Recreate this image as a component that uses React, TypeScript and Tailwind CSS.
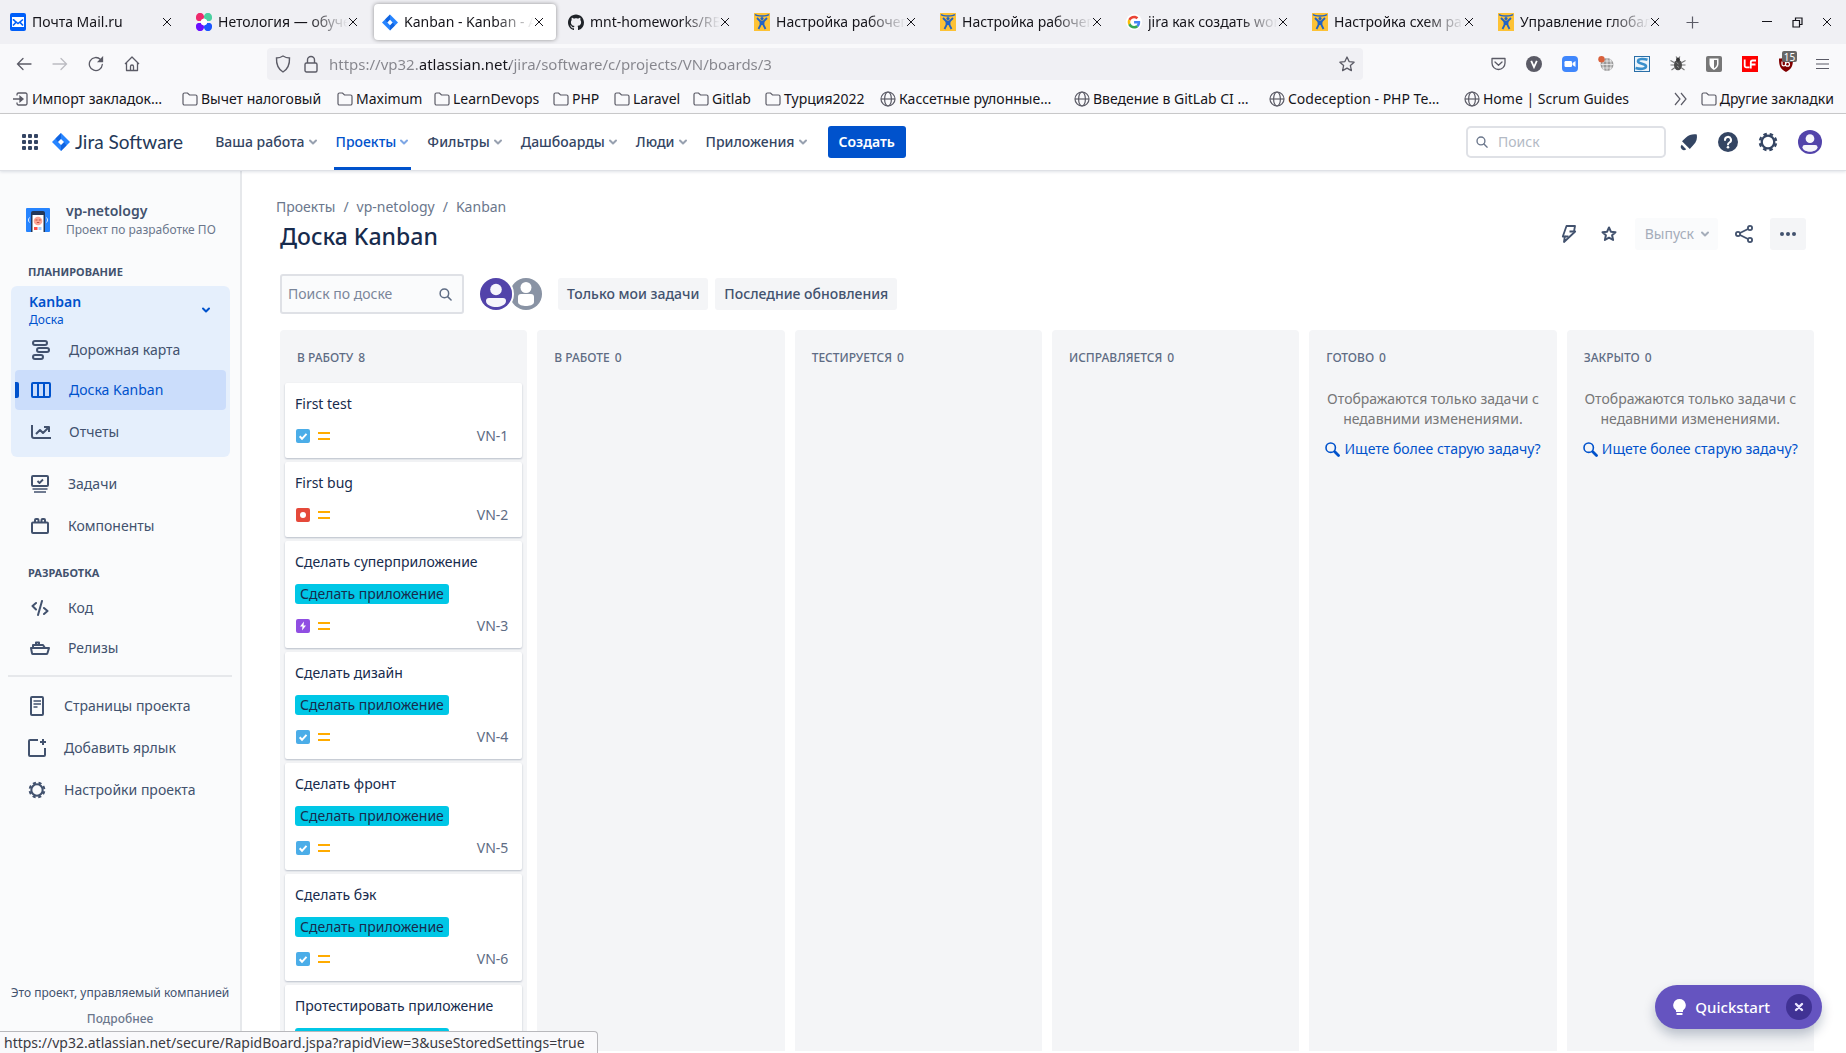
import React, { ReactNode } from "react";

/* ---------- browser chrome icons ---------- */

const Close = ({ size = 10 }: { size?: number }) => (
  <svg width={size} height={size} viewBox="0 0 10 10" fill="none" stroke="#15141a" strokeWidth="1">
    <path d="M1 1l8 8M9 1l-8 8" />
  </svg>
);

const MailIcon = () => (
  <svg width="16" height="18" viewBox="0 0 16 18">
    <rect width="16" height="18" rx="2" fill="#005ff9" />
    <rect x="2" y="4" width="12" height="10" fill="#fff" />
    <path d="M3 6.500l3.200 2.600L3 12.500M13 6.500L8 10.500 3 6.500M9.800 9.100l3.200 3.400" fill="none" stroke="#005ff9" strokeWidth="1.600" />
  </svg>
);

const NetologyIcon = () => (
  <svg width="16" height="18" viewBox="0 0 16 18">
    <path d="M0 4a4 4 0 1 1 7 2.500L5.500 8H2a3 3 0 0 1-2-3z" fill="#ee2a6c" />
    <path d="M16 4a4 4 0 1 0-7 2.500L10.500 8H14a3 3 0 0 0 2-3z" fill="#4bd0a0" />
    <path d="M0 14a4 4 0 1 0 7-2.500L5.500 10H2a3 3 0 0 0-2 3z" fill="#6b0fff" />
    <path d="M16 14a4 4 0 1 1-7-2.500L10.500 10H14a3 3 0 0 1 2 3z" fill="#1a56ff" />
    <circle cx="8" cy="9" r="3.200" fill="#fff" />
  </svg>
);

const JiraIcon = ({ size = 18 }: { size?: number }) => (
  <svg width={size} height={size} viewBox="0 0 18 18">
    <path d="M9 0l9 9-9 9-9-9z" fill="#2684ff" />
    <path d="M9 0v6L6 9 3.500 5.500z" fill="#0b5ad6" opacity="0.750" />
    <path d="M9 18v-6l3-3 2.500 3.500z" fill="#0b5ad6" opacity="0.750" />
    <path d="M9 6l3 3-3 3-3-3z" fill="#fff" />
  </svg>
);

const GithubIcon = () => (
  <svg width="17" height="17" viewBox="0 0 16 16" fill="#1f2328">
    <path d="M8 0C3.580 0 0 3.580 0 8c0 3.540 2.290 6.530 5.470 7.590.4.070.550-.170.550-.380 0-.190-.010-.820-.010-1.490-2.010.370-2.530-.490-2.690-.940-.090-.230-.480-.940-.820-1.130-.280-.150-.680-.520-.010-.530.630-.010 1.080.580 1.230.820.720 1.210 1.870.870 2.330.660.070-.520.280-.870.510-1.070-1.780-.2-3.640-.890-3.640-3.950 0-.870.310-1.590.820-2.150-.080-.2-.360-1.020.080-2.120 0 0 .670-.210 2.200.820.640-.180 1.320-.270 2-.270s1.360.090 2 .270c1.530-1.040 2.200-.820 2.200-.820.440 1.100.160 1.920.080 2.120.510.560.820 1.270.820 2.150 0 3.070-1.870 3.750-3.650 3.950.290.250.540.730.540 1.480 0 1.070-.010 1.930-.010 2.200 0 .210.150.460.550.380A8.010 8.010 0 0 0 16 8c0-4.420-3.580-8-8-8z" />
  </svg>
);

const OldJiraIcon = () => (
  <svg width="16" height="18" viewBox="0 0 16 18">
    <rect width="16" height="18" fill="#fdc235" />
    <path d="M1 1.500c2.500 2 11.500 2 14 0" fill="none" stroke="#2263c4" strokeWidth="1.400" />
    <path d="M3 5l3.500 3.500h3L13 5M6.500 8v4L4.500 16M9.500 8v4l2 4" fill="none" stroke="#2263c4" strokeWidth="1.800" />
    <path d="M5.500 8h5L9.500 12h-3z" fill="#2263c4" />
    <circle cx="8" cy="5.500" r="1.600" fill="#2263c4" />
  </svg>
);

const GoogleIcon = () => (
  <svg width="16" height="16" viewBox="0 0 48 48">
    <circle cx="24" cy="24" r="24" fill="#fff" />
    <g transform="translate(5 5) scale(.8)">
      <path fill="#EA4335" d="M24 9.500c3.540 0 6.710 1.220 9.210 3.600l6.850-6.850C35.900 2.380 30.470 0 24 0 14.620 0 6.510 5.380 2.560 13.220l7.980 6.190C12.430 13.720 17.740 9.500 24 9.500z" />
      <path fill="#4285F4" d="M46.980 24.550c0-1.570-.15-3.090-.38-4.550H24v9.020h12.940c-.58 2.960-2.260 5.480-4.780 7.180l7.730 6c4.510-4.180 7.090-10.360 7.090-17.650z" />
      <path fill="#FBBC05" d="M10.530 28.590c-.48-1.450-.76-2.990-.76-4.590s.27-3.140.76-4.590l-7.980-6.190C.92 16.460 0 20.120 0 24c0 3.880.92 7.540 2.560 10.780l7.970-6.190z" />
      <path fill="#34A853" d="M24 48c6.480 0 11.930-2.130 15.890-5.810l-7.730-6c-2.150 1.450-4.920 2.300-8.160 2.300-6.260 0-11.570-4.220-13.470-9.910l-7.980 6.190C6.510 42.620 14.620 48 24 48z" />
    </g>
  </svg>
);

const FolderIcon = () => (
  <svg width="16" height="16" viewBox="0 0 16 16" fill="none" stroke="#5b5b66" strokeWidth="1.200" className="shrink-0">
    <path d="M1 3.500a1.500 1.500 0 0 1 1.500-1.500h3l2 2h6A1.500 1.500 0 0 1 15 5.500v7a1.500 1.500 0 0 1-1.500 1.500h-11A1.500 1.500 0 0 1 1 12.500z" />
  </svg>
);

const GlobeIcon = () => (
  <svg width="16" height="16" viewBox="0 0 16 16" fill="none" stroke="#5b5b66" strokeWidth="1.200" className="shrink-0">
    <circle cx="8" cy="8" r="7" />
    <ellipse cx="8" cy="8" rx="3.400" ry="7" />
    <path d="M1 8h14" />
  </svg>
);

const ImportIcon = () => (
  <svg width="16" height="16" viewBox="0 0 16 16" fill="none" stroke="#5b5b66" strokeWidth="1.300" className="shrink-0">
    <path d="M4 4.500V3.500A1.500 1.500 0 0 1 5.500 2h7A1.500 1.500 0 0 1 14 3.500v9a1.500 1.500 0 0 1-1.500 1.500h-7A1.500 1.500 0 0 1 4 12.500V11.500M0 8h8" />
    <path d="M7 5.500L10 8l-3 2.500z" fill="#5b5b66" />
  </svg>
);

type TabInfo = { icon: ReactNode; title: string; active?: boolean };
const tabs: TabInfo[] = [
  { icon: <MailIcon />, title: "Почта Mail.ru" },
  { icon: <NetologyIcon />, title: "Нетология — обучение" },
  { icon: <JiraIcon size={17} />, title: "Kanban - Kanban - Agile", active: true },
  { icon: <GithubIcon />, title: "mnt-homeworks/README" },
  { icon: <OldJiraIcon />, title: "Настройка рабочего" },
  { icon: <OldJiraIcon />, title: "Настройка рабочего" },
  { icon: <GoogleIcon />, title: "jira как создать workflow" },
  { icon: <OldJiraIcon />, title: "Настройка схем рабочих" },
  { icon: <OldJiraIcon />, title: "Управление глобальными" },
];

const TabStrip = () => (
  <div className="flex h-11 items-stretch bg-[#f0f0f4] pr-1">
    <div role="tablist" className="flex min-w-0">
      {tabs.map((t, i) => (
        <div key={i} className="flex w-[186px] min-w-0 px-[2px] py-1">
          <div
            className={
              t.active
                ? "flex min-w-0 flex-1 items-center rounded bg-white pr-3 pl-2 shadow-[0_0_4px_rgba(0,0,0,0.4)]"
                : "flex min-w-0 flex-1 items-center pr-3 pl-2"
            }
          >
            <button role="tab" aria-selected={!!t.active} className="flex min-w-0 flex-1 items-center gap-[6px]">
              <span className="flex w-4 shrink-0 justify-center">{t.icon}</span>
              <span className="flex-1 overflow-hidden text-left text-sm whitespace-nowrap text-[#15141a] [mask-image:linear-gradient(to_right,black_70%,transparent)]">
                {t.title}
              </span>
            </button>
            <button aria-label="Закрыть вкладку" className="shrink-0">
              <Close />
            </button>
          </div>
        </div>
      ))}
    </div>
    <button aria-label="Новая вкладка" className="flex w-9 items-center justify-center">
      <svg width="13" height="13" viewBox="0 0 13 13" stroke="#5b5b66" strokeWidth="1.200">
        <path d="M6.500 0.500v12M0.500 6.500h12" />
      </svg>
    </button>
    <div className="ml-auto flex">
      <button aria-label="Свернуть" className="flex w-[30px] items-center justify-center">
        <svg width="10" height="10" stroke="#15141a">
          <path d="M0 4.500h10" />
        </svg>
      </button>
      <button aria-label="Восстановить" className="flex w-[30px] items-center justify-center">
        <svg width="11" height="11" fill="none" stroke="#15141a" strokeWidth="1.200">
          <path d="M1 3.500h6.500V10H1zM3.500 3V1H10v6.500H8" />
        </svg>
      </button>
      <button aria-label="Закрыть" className="flex w-[30px] items-center justify-center">
        <Close />
      </button>
    </div>
  </div>
);

const extensions: { label: string; icon: ReactNode }[] = [
  {
    label: "Pocket",
    icon: (
      <svg width="15" height="14" viewBox="0 0 15 14" fill="none" stroke="#5b5b66" strokeWidth="1.300" strokeLinejoin="round" strokeLinecap="round">
        <path d="M1 1.500h13V6a6.500 6.500 0 0 1-13 0zM4 5l3.500 3.300L11 5" />
      </svg>
    ),
  },
  {
    label: "V",
    icon: (
      <svg width="16" height="16" viewBox="0 0 16 16">
        <circle cx="8" cy="8" r="8" fill="#5b5b66" />
        <path d="M5.200 4.800L8 11l2.800-6.200" fill="none" stroke="#fff" strokeWidth="1.800" />
      </svg>
    ),
  },
  {
    label: "Zoom",
    icon: (
      <svg width="16" height="16" viewBox="0 0 16 16">
        <rect width="16" height="16" rx="4" fill="#4087fc" />
        <rect x="2.500" y="5" width="7.500" height="6" rx="1.200" fill="#fff" />
        <path d="M10.500 7l3-2v6l-3-2z" fill="#fff" />
      </svg>
    ),
  },
  {
    label: "Прокси",
    icon: (
      <svg width="16" height="16" viewBox="0 0 16 16">
        <circle cx="9" cy="8.500" r="6.500" fill="#9b9b9b" />
        <path d="M9 2v13M2.500 8.500h13M4 5h10M4 12h10M6 3c-1.500 4-1.500 7 0 11M12 3c1.500 4 1.500 7 0 11" fill="none" stroke="#f9f9fb" strokeWidth="0.700" />
        <circle cx="3.500" cy="3.200" r="3.200" fill="#d9603b" />
      </svg>
    ),
  },
  {
    label: "Stylish",
    icon: (
      <svg width="16" height="16" viewBox="0 0 16 16">
        <rect x="0.500" y="0.500" width="15" height="15" fill="#eef5fb" stroke="#2a6fa8" />
        <path d="M13.500 3.800C10 2.500 4 2.500 4 5.300c0 3 8 2 8 5 0 3-6 3-10.500 1.700" fill="none" stroke="#3a8fcb" strokeWidth="2.600" />
      </svg>
    ),
  },
  {
    label: "Жук",
    icon: (
      <svg width="16" height="16" viewBox="0 0 16 16">
        <ellipse cx="8" cy="9" rx="4" ry="5.200" fill="#4c4c4c" />
        <circle cx="8" cy="3.500" r="2" fill="#333" />
        <path d="M0.500 4.500L5 7M15.500 4.500L11 7M0.500 9H4M15.500 9H12M1.500 14L5 11.500M14.500 14L11 11.500M6 0.500L7 2M10 0.500L9 2" stroke="#777" strokeWidth="1.100" />
        <path d="M6.500 6.500l2 1.500M7 10l2 1.500" stroke="#999" />
      </svg>
    ),
  },
  {
    label: "Bitwarden",
    icon: (
      <svg width="16" height="16" viewBox="0 0 16 16">
        <rect width="16" height="16" rx="2" fill="#777" />
        <path d="M3.500 2.500h9V8c0 3-2.500 5-4.500 6-2-1-4.500-3-4.500-6z" fill="#fff" />
        <path d="M8 4h3v4c0 2-1.500 3.300-3 4.200z" fill="#777" />
      </svg>
    ),
  },
  {
    label: "LF",
    icon: (
      <svg width="16" height="16" viewBox="0 0 16 16">
        <rect width="16" height="16" fill="#f00" />
        <path d="M2.700 3.500v6.300a1.500 1.500 0 0 0 1.500 1.500H7.500M8.800 12.500V6.300a1.800 1.800 0 0 1 1.800-1.800H14M9 8.500h4.500" fill="none" stroke="#fff" strokeWidth="1.800" />
      </svg>
    ),
  },
  {
    label: "uBlock",
    icon: (
      <span className="relative flex">
        <svg width="16" height="16" viewBox="0 0 16 16">
          <path d="M8 0.500c2 1.500 4 2 7 2 0 7-1 10.500-7 13.500-6-3-7-6.500-7-13.500 3 0 5-0.500 7-2z" fill="#800000" />
          <path d="M4 5.500v2.700a1.500 1.500 0 0 0 3.500 0V5.500v2.700a2 2 0 0 0 4 0 1.800 1.800 0 0 0-3.500-.7" fill="none" stroke="#fff" strokeWidth="1.200" />
        </svg>
        <span className="absolute -top-[5px] left-1 flex h-[11px] w-[15px] items-center justify-center rounded-[2px] bg-[#666] text-[10px] leading-none text-white">
          15
        </span>
      </span>
    ),
  },
  {
    label: "Меню",
    icon: (
      <svg width="13" height="12" stroke="#5b5b66" strokeWidth="1.200">
        <path d="M0 1.500h13M0 6h13M0 10.500h13" />
      </svg>
    ),
  },
];

const NavBar = () => (
  <div className="flex h-10 items-center bg-[#f9f9fb] px-[6px]">
    <button aria-label="Назад" className="flex w-9 justify-center">
      <svg width="16" height="16" viewBox="0 0 16 16" fill="none" stroke="#5b5b66" strokeWidth="1.300" strokeLinecap="round">
        <path d="M15 8H1.500M7 2.500L1.500 8 7 13.500" />
      </svg>
    </button>
    <button aria-label="Вперёд" className="flex w-9 justify-center">
      <svg width="16" height="16" viewBox="0 0 16 16" fill="none" stroke="#bcbcc2" strokeWidth="1.300" strokeLinecap="round">
        <path d="M1 8h13.500M9 2.500L14.500 8 9 13.500" />
      </svg>
    </button>
    <button aria-label="Обновить" className="flex w-9 justify-center">
      <svg width="16" height="16" viewBox="0 0 16 16" fill="none" stroke="#5b5b66" strokeWidth="1.300" strokeLinecap="round">
        <path d="M14.300 8.500A6.500 6.500 0 1 1 12.500 3.500L14 5" />
        <path d="M14.500 1.500V5.500H10.500z" fill="#5b5b66" />
      </svg>
    </button>
    <button aria-label="Домой" className="flex w-9 justify-center">
      <svg width="16" height="16" viewBox="0 0 16 16" fill="none" stroke="#5b5b66" strokeWidth="1.300" strokeLinejoin="round">
        <path d="M1 8l7-7 7 7M2.500 7v7.500h11V7M6.500 14.500v-4a1.500 1.500 0 0 1 3 0v4" />
      </svg>
    </button>
    <div className="mr-[117px] ml-[117px] flex h-8 min-w-0 flex-1 items-center rounded bg-[#f0f0f4] px-2">
      <svg width="16" height="18" viewBox="0 0 16 18" fill="none" stroke="#5b5b66" strokeWidth="1.400">
        <path d="M8 1c2 1.300 4 2 6.500 2 .3 7-1.500 11-6.500 14C3 14 1.200 10 1.500 3 4 3 6 2.300 8 1z" />
      </svg>
      <svg width="14" height="18" viewBox="0 0 14 18" className="ml-[13px]" fill="none" stroke="#5b5b66" strokeWidth="1.400">
        <rect x="1" y="8" width="12" height="9" rx="1.500" />
        <path d="M3.500 8V5a3.500 3.500 0 0 1 7 0v3" />
      </svg>
      <input
        aria-label="Адрес"
        defaultValue="https://vp32.atlassian.net/jira/software/c/projects/VN/boards/3"
        className="ml-[11px] min-w-0 flex-1 bg-[linear-gradient(to_right,#85858c_91px,#15141a_91px,#15141a_181px,#85858c_181px)] bg-clip-text text-[15px] text-transparent outline-none"
      />
      <button aria-label="Добавить в закладки">
        <svg width="16" height="16" viewBox="0 0 16 16" fill="none" stroke="#5b5b66" strokeWidth="1.300" strokeLinejoin="round">
          <path d="M8 1l2.100 4.600 5 .6-3.700 3.400 1 5L8 12.100l-4.400 2.500 1-5L.9 6.200l5-.6z" />
        </svg>
      </button>
    </div>
    {extensions.map((e) => (
      <button key={e.label} aria-label={e.label} className="flex w-9 justify-center">
        {e.icon}
      </button>
    ))}
  </div>
);

const bookmarks: { title: string; icon: ReactNode; width: string }[] = [
  { title: "Импорт закладок…", icon: <ImportIcon />, width: "w-[169px]" },
  { title: "Вычет налоговый", icon: <FolderIcon />, width: "w-[155px]" },
  { title: "Maximum", icon: <FolderIcon />, width: "w-[97px]" },
  { title: "LearnDevops", icon: <FolderIcon />, width: "w-[119px]" },
  { title: "PHP", icon: <FolderIcon />, width: "w-[61px]" },
  { title: "Laravel", icon: <FolderIcon />, width: "w-[79px]" },
  { title: "Gitlab", icon: <FolderIcon />, width: "w-[72px]" },
  { title: "Турция2022", icon: <FolderIcon />, width: "w-[115px]" },
  { title: "Кассетные рулонные…", icon: <GlobeIcon />, width: "w-[194px]" },
  { title: "Введение в GitLab CI …", icon: <GlobeIcon />, width: "w-[195px]" },
  { title: "Codeception - PHP Te…", icon: <GlobeIcon />, width: "w-[195px]" },
  { title: "Home | Scrum Guides", icon: <GlobeIcon />, width: "w-[180px]" },
];

const BookmarkBar = () => (
  <div className="flex h-[30px] items-center border-b border-[#cccccc] bg-[#f9f9fb] pr-3 pl-[13px] text-sm text-[#15141a]">
    {bookmarks.map((b) => (
      <button key={b.title} className={`${b.width} flex shrink-0 items-center gap-[3px] whitespace-nowrap`}>
        {b.icon}
        {b.title}
      </button>
    ))}
    <button aria-label="Ещё закладки" className="ml-auto">
      <svg width="13" height="14" viewBox="0 0 13 14" fill="none" stroke="#5b5b66" strokeWidth="1.200">
        <path d="M1 1l5 6-5 6M7 1l5 6-5 6" />
      </svg>
    </button>
    <button className="ml-[14px] flex items-center gap-[3px] whitespace-nowrap">
      <FolderIcon />
      Другие закладки
    </button>
  </div>
);

/* ---------- Jira icons ---------- */

const Chevron = ({ className = "" }: { className?: string }) => (
  <svg width="10" height="8" viewBox="0 0 10 8" className={className} fill="none" stroke="currentColor" strokeWidth="2" strokeLinecap="round" strokeLinejoin="round">
    <path d="M2 2.500l3 3 3-3" />
  </svg>
);

const Gear = () => (
  <svg width="20" height="20" viewBox="0 0 20 20" fill="none" stroke="currentColor">
    <circle cx="10" cy="10" r="6.300" strokeWidth="2.300" />
    <circle cx="10" cy="10" r="8.200" strokeWidth="2.200" strokeDasharray="3.500 2.940" strokeDashoffset="-1.470" />
  </svg>
);

const Person = ({ size, color }: { size: number; color: string }) => (
  <svg width={size} height={size} viewBox="0 0 32 32">
    <circle cx="16" cy="16" r="16" fill={color} />
    <circle cx="16" cy="11.500" r="5.800" fill="#fff" fillOpacity="0.950" />
    <path d="M6 23a3 3 0 0 1 3-3h14a3 3 0 0 1 3 3c0 4-6 6-10 6S6 27 6 23z" fill="#fff" fillOpacity="0.950" />
  </svg>
);

const Magnifier = ({ size = 14 }: { size?: number }) => (
  <svg width={size} height={size} viewBox="0 0 14 14" fill="none" stroke="currentColor" strokeWidth="1.600" strokeLinecap="round">
    <circle cx="5.800" cy="5.800" r="4.600" />
    <path d="M9.300 9.300l3.700 3.700" />
  </svg>
);

const BoldMagnifier = () => (
  <svg width="15" height="15" viewBox="0 0 15 15" fill="none" stroke="currentColor" strokeLinecap="round">
    <circle cx="5.700" cy="5.700" r="4.700" strokeWidth="1.600" />
    <path d="M9.800 9.800l3.700 3.700" strokeWidth="2.800" />
  </svg>
);

const menu = ["Ваша работа", "Проекты", "Фильтры", "Дашбоарды", "Люди", "Приложения"];

const JiraHeader = () => (
  <header className="relative flex h-[57px] shrink-0 items-center border-b border-[#dfe1e6] bg-white pr-6 pl-[22px] text-[#344563] shadow-[0_1px_3px_rgba(9,30,66,0.13)]">
    <button aria-label="Приложения Atlassian" className="mr-[14px]">
      <svg width="16" height="16" viewBox="0 0 16 16" fill="#344563">
        {[0, 6, 12].map((y) => [0, 6, 12].map((x) => <rect key={`${x}-${y}`} x={x} y={y} width="4" height="4" rx="1" />))}
      </svg>
    </button>
    <a href="#home" className="flex items-center gap-[5px] font-['Lato','Noto_Sans',sans-serif] text-[19px] text-[#253858]">
      <JiraIcon />
      Jira Software
    </a>
    <nav className="ml-6 flex h-14 items-stretch gap-[2px]">
      {menu.map((m) => (
        <button
          key={m}
          className={
            m === "Проекты"
              ? "relative flex items-center gap-[3px] px-2 text-sm font-medium text-[#0052cc]"
              : "flex items-center gap-[3px] px-2 text-sm font-medium"
          }
        >
          {m}
          <Chevron className="opacity-50" />
          {m === "Проекты" && <span className="absolute inset-x-[6px] bottom-0 h-[3px] bg-[#0052cc]" />}
        </button>
      ))}
    </nav>
    <button className="ml-3 h-8 rounded-[3px] bg-[#0052cc] px-[11px] text-sm font-semibold text-white">Создать</button>
    <label className="ml-auto flex h-8 w-50 items-center gap-[10px] rounded-[5px] border-2 border-[#dfe1e6] bg-white px-2 text-[#6b778c]">
      <Magnifier size={12} />
      <input aria-label="Поиск" placeholder="Поиск" className="min-w-0 flex-1 text-sm outline-none placeholder:text-[#b3bac5]" />
    </label>
    <button aria-label="Уведомления" className="ml-[14px]">
      <svg width="18" height="18" viewBox="0 0 18 18" fill="#344563">
        <path d="M16.800 1.500c.6 3.500-.2 7.500-3.200 10.300L9.800 16 2 8.200 6 4.500C9 1.800 13 .8 16.800 1.500z" />
        <path d="M1.800 11.800l4.400 4.400a3 3 0 0 1-4.400-4.400z" />
      </svg>
    </button>
    <button aria-label="Справка" className="ml-5">
      <svg width="20" height="20" viewBox="0 0 20 20">
        <circle cx="10" cy="10" r="10" fill="#344563" />
        <path d="M7 8a3 3 0 1 1 4.500 2.500c-1 .6-1.500 1-1.500 2" fill="none" stroke="#fff" strokeWidth="2" strokeLinecap="round" />
        <circle cx="10" cy="15.300" r="1.300" fill="#fff" />
      </svg>
    </button>
    <button aria-label="Настройки" className="ml-5">
      <Gear />
    </button>
    <button aria-label="Профиль" className="ml-5">
      <Person size={24} color="#5243aa" />
    </button>
  </header>
);

/* ---------- sidebar ---------- */

const stroke2 = { fill: "none", stroke: "currentColor", strokeWidth: 2, strokeLinejoin: "round" as const };

const RoadmapIcon = () => (
  <svg width="20" height="20" viewBox="0 0 20 20" {...stroke2}>
    <rect x="2" y="1" width="14" height="4" rx="2" />
    <rect x="6" y="8" width="12" height="4" rx="2" />
    <rect x="2" y="15" width="10" height="4" rx="2" />
  </svg>
);
const BoardIcon = () => (
  <svg width="20" height="16" viewBox="0 0 20 16" {...stroke2}>
    <rect x="1" y="1" width="18" height="14" rx="1" />
    <path d="M7 1v14M13 1v14" />
  </svg>
);
const ReportsIcon = () => (
  <svg width="20" height="16" viewBox="0 0 20 16" {...stroke2}>
    <path d="M1 1v11a2 2 0 0 0 2 2h17M5 10l4-4 3 3 5-5M13 3h5v5" />
  </svg>
);
const IssuesIcon = () => (
  <svg width="18" height="18" viewBox="0 0 18 18" {...stroke2}>
    <rect x="1" y="1" width="16" height="10" rx="1" />
    <path d="M6.500 6l2 2 3.500-3.500" strokeWidth="1.800" />
    <path d="M1.500 14h15M3 17h12" strokeWidth="1.600" />
  </svg>
);
const ComponentsIcon = () => (
  <svg width="18" height="16" viewBox="0 0 18 16" {...stroke2}>
    <rect x="1" y="4.500" width="16" height="10.500" rx="1" />
    <path d="M4 4V2a1 1 0 0 1 1-1h1.500a1 1 0 0 1 1 1v2M10.500 4V2a1 1 0 0 1 1-1H13a1 1 0 0 1 1 1v2" />
  </svg>
);
const CodeIcon = () => (
  <svg width="18" height="16" viewBox="0 0 18 16" {...stroke2} strokeLinecap="round">
    <path d="M5 3L1.500 6 5 9.500M13 8l3.500 3-3.500 3M11 1L7 15" />
  </svg>
);
const ShipIcon = () => (
  <svg width="20" height="14" viewBox="0 0 20 14" {...stroke2}>
    <path d="M1 7h18l-1.500 5a1 1 0 0 1-1 1H3a1 1 0 0 1-1-.8zM3 7V4h10l2 3M6 4V1.500h3V4" />
  </svg>
);
const PageIcon = () => (
  <svg width="14" height="20" viewBox="0 0 14 20" {...stroke2}>
    <rect x="1" y="1" width="12" height="18" rx="1" />
    <path d="M3.500 5h7.500M3.500 8h7.500M3.500 11h4" strokeWidth="1.600" />
  </svg>
);
const ShortcutIcon = () => (
  <svg width="18" height="18" viewBox="0 0 18 18" {...stroke2}>
    <path d="M10 1H2a1 1 0 0 0-1 1v14a1 1 0 0 0 1 1h14a1 1 0 0 0 1-1V9M15 0v6M12 3h6" />
  </svg>
);

const SideLink = ({ icon, children, pad, gap = "gap-[18px]", iconBox = "w-5" }: { icon: ReactNode; children: ReactNode; pad: string; gap?: string; iconBox?: string }) => (
  <a href="#section" className={`${pad} ${gap} flex h-10 items-center text-sm`}>
    <span className={`${iconBox} flex shrink-0 justify-center`}>{icon}</span>
    {children}
  </a>
);

const Sidebar = () => (
  <aside className="flex w-[242px] shrink-0 flex-col border-r-2 border-[#e6e8eb] bg-[#fafbfc] pt-[30px] pb-[26px] text-[#42526e]">
    <div className="flex items-center gap-4 pl-[26px]">
      <svg width="24" height="24" viewBox="0 0 24 24" className="shrink-0">
        <rect width="24" height="24" rx="1" fill="#2684ff" />
        <path d="M5 24V5a2 2 0 0 1 2-2h10a2 2 0 0 1 2 2v19z" fill="#253858" />
        <rect x="6.500" y="7" width="11" height="17" fill="#fff" />
        <circle cx="12" cy="13" r="4.300" fill="#ffa695" />
        <path d="M9.500 12h2M12.800 12h2M10.800 14.500h2.500" stroke="#b5483a" strokeWidth="0.900" />
        <rect x="8" y="19" width="3.500" height="3" fill="#ff4f45" />
        <rect x="12.500" y="19" width="3" height="3" fill="#a8ccff" />
        <path d="M3.500 9.500c-1.300 1.500-1.300 3.500 0 5M20.500 9.500c1.300 1.500 1.300 3.500 0 5" fill="none" stroke="#fff" strokeWidth="0.900" />
      </svg>
      <div>
        <div className="text-sm font-semibold">vp-netology</div>
        <div className="mt-[1px] text-xs text-[#6b778c]">Проект по разработке ПО</div>
      </div>
    </div>
    <h2 className="mt-[26px] pl-7 text-[11px] leading-4 font-bold">ПЛАНИРОВАНИЕ</h2>
    <div className="mt-[6px] mr-[10px] ml-[11px] rounded-md bg-[#e5effc] pt-[6px] pb-[5px]">
      <button className="flex w-full items-center justify-between pr-[19px] pl-[18px] text-left text-[#0052cc]">
        <span>
          <span className="block text-sm font-semibold">Kanban</span>
          <span className="block text-xs">Доска</span>
        </span>
        <Chevron />
      </button>
      <div className="mx-1 mt-[2px]">
        <SideLink pad="pl-4" icon={<RoadmapIcon />}>Дорожная карта</SideLink>
        <div className="relative rounded bg-[#cbddfb] text-[#0052cc]">
          <span className="absolute top-3 left-0 h-4 w-1 rounded-r-[2px] bg-[#0052cc]" />
          <SideLink pad="pl-4" icon={<BoardIcon />}>Доска Kanban</SideLink>
        </div>
        <div className="mt-[2px]">
          <SideLink pad="pl-4" icon={<ReportsIcon />}>Отчеты</SideLink>
        </div>
      </div>
    </div>
    <div className="mt-[7px] flex flex-col gap-[2px]">
      <SideLink pad="pl-[30px]" icon={<IssuesIcon />}>Задачи</SideLink>
      <SideLink pad="pl-[30px]" icon={<ComponentsIcon />}>Компоненты</SideLink>
    </div>
    <h2 className="mt-[19px] pl-7 text-[11px] leading-4 font-bold">РАЗРАБОТКА</h2>
    <div className="mt-[7px]">
      <SideLink pad="pl-[30px]" icon={<CodeIcon />}>Код</SideLink>
      <SideLink pad="pl-[30px]" icon={<ShipIcon />}>Релизы</SideLink>
    </div>
    <hr className="mx-2 mt-[7px] border-t-2 border-[#e6e8eb]" />
    <div className="mt-[9px] flex flex-col gap-[2px]">
      <SideLink pad="pl-7" iconBox="w-[18px]" icon={<PageIcon />}>Страницы проекта</SideLink>
      <SideLink pad="pl-7" iconBox="w-[18px]" icon={<ShortcutIcon />}>Добавить ярлык</SideLink>
      <SideLink pad="pl-7" iconBox="w-[18px]" icon={<Gear />}>Настройки проекта</SideLink>
    </div>
    <div className="mt-auto flex flex-col items-center gap-[10px] text-xs whitespace-nowrap">
      <p>Это проект, управляемый компанией</p>
      <a href="#more" className="font-medium text-[#6b778c]">Подробнее</a>
    </div>
  </aside>
);

/* ---------- board ---------- */

type Kind = "task" | "bug" | "epic";

const KindIcon = ({ kind }: { kind: Kind }) => (
  <svg width="14" height="14" viewBox="0 0 14 14">
    <rect width="14" height="14" rx="2" fill={kind === "task" ? "#4bade8" : kind === "bug" ? "#e5493a" : "#904ee2"} />
    {kind === "task" && <path d="M3.700 7.300l2.300 2.500 4.500-5" fill="none" stroke="#fff" strokeWidth="2" />}
    {kind === "bug" && <circle cx="7" cy="7" r="3" fill="#fff" />}
    {kind === "epic" && <path d="M8 2.500L4 7.500h2.500L6 11.500l4-5H7.500z" fill="#fff" />}
  </svg>
);

const issues: { title: string; id: string; kind: Kind; epic?: boolean }[] = [
  { title: "First test", id: "VN-1", kind: "task" },
  { title: "First bug", id: "VN-2", kind: "bug" },
  { title: "Сделать суперприложение", id: "VN-3", kind: "epic", epic: true },
  { title: "Сделать дизайн", id: "VN-4", kind: "task", epic: true },
  { title: "Сделать фронт", id: "VN-5", kind: "task", epic: true },
  { title: "Сделать бэк", id: "VN-6", kind: "task", epic: true },
  { title: "Протестировать приложение", id: "VN-7", kind: "task", epic: true },
];

const Column = ({ title, count, children }: { title: string; count: number; children?: ReactNode }) => (
  <section className="min-w-0 overflow-hidden rounded-t-[4px] bg-[#f4f5f7]">
    <h2 className="flex gap-[5px] px-[17px] pt-5 pb-[17px] text-xs font-medium text-[#5e6c84]">
      {title}
      <span>{count}</span>
    </h2>
    {children}
  </section>
);

const Recent = () => (
  <div className="flex flex-col items-center gap-[10px] pt-[6px] text-center text-sm">
    <p className="px-4 text-[#777]">Отображаются только задачи с недавними изменениями.</p>
    <a href="#older" className="flex items-center gap-1 whitespace-nowrap text-[#0052cc]">
      <BoldMagnifier />
      Ищете более старую задачу?
    </a>
  </div>
);

const Board = () => (
  <div className="mt-4 grid min-h-0 flex-1 grid-cols-6 gap-[10px] overflow-hidden">
    <Column title="В РАБОТУ" count={8}>
      <div className="flex flex-col gap-1 px-[5px]">
        {issues.map((it) => (
          <article key={it.id} className="rounded-[2px] bg-white pt-[11px] pr-[14px] pb-3 pl-[10px] shadow-[0_1px_2px_rgba(9,30,66,0.25)]">
            <h3 className="truncate text-sm text-[#172b4d]">{it.title}</h3>
            {it.epic && (
              <div className="mt-3 flex">
                <span className="rounded-[3px] bg-[#00c7e6] px-[5px] text-sm text-[#172b4d]">Сделать приложение</span>
              </div>
            )}
            <div className="mt-3 flex h-5 items-center gap-2 pl-[1px]">
              <KindIcon kind={it.kind} />
              <svg width="12" height="8" fill="#ffab00">
                <rect width="12" height="2" />
                <rect y="6" width="12" height="2" />
              </svg>
              <span className="ml-auto text-sm text-[#5e6c84]">{it.id}</span>
            </div>
          </article>
        ))}
      </div>
    </Column>
    <Column title="В РАБОТЕ" count={0} />
    <Column title="ТЕСТИРУЕТСЯ" count={0} />
    <Column title="ИСПРАВЛЯЕТСЯ" count={0} />
    <Column title="ГОТОВО" count={0}>
      <Recent />
    </Column>
    <Column title="ЗАКРЫТО" count={0}>
      <Recent />
    </Column>
  </div>
);

const Main = () => (
  <main className="flex min-w-0 flex-1 flex-col bg-white pt-[26px] pr-8 pb-[2px] pl-[38px]">
    <nav className="-ml-1 flex gap-2 text-sm text-[#6b778c]">
      <a href="#projects">Проекты</a>
      <span>/</span>
      <a href="#project">vp-netology</a>
      <span>/</span>
      <a href="#board">Kanban</a>
    </nav>
    <div className="mt-[1px] flex h-8 items-center text-[#42526e]">
      <h1 className="pt-1 text-[23px] leading-7 font-medium text-[#172b4d]">Доска Kanban</h1>
      <button aria-label="Автоматизация" className="ml-auto">
        <svg width="16" height="20" viewBox="0 0 16 20" fill="none" stroke="currentColor" strokeWidth="1.800" strokeLinejoin="round">
          <path d="M5.500 2h8.500l-1 5.500h1.200L3 18l.8-5.500H1.800z" />
          <path d="M12.800 7.500H8.500M4 12.500h3.500" />
        </svg>
      </button>
      <button aria-label="В избранное" className="ml-6">
        <svg width="16" height="16" viewBox="0 0 16 16" fill="none" stroke="currentColor" strokeWidth="2" strokeLinejoin="round">
          <path d="M8 1.500l1.900 4.200 4.600.5-3.400 3.100 1 4.700L8 11.700 3.900 14l1-4.700L1.500 6.200l4.600-.5z" />
        </svg>
      </button>
      <button disabled className="ml-[18px] flex h-8 items-center gap-[6px] rounded-[3px] bg-[#fafbfc] px-2 pl-[10px] text-sm text-[#a5adba]">
        Выпуск
        <Chevron />
      </button>
      <button aria-label="Поделиться" className="ml-[17px]">
        <svg width="18" height="18" viewBox="0 0 18 18" fill="none" stroke="currentColor" strokeWidth="1.800">
          <circle cx="3" cy="9" r="2.100" />
          <circle cx="15" cy="3" r="2.100" />
          <circle cx="15" cy="15" r="2.100" />
          <path d="M5 8l8-4M5 10l8 4" />
        </svg>
      </button>
      <button aria-label="Ещё" className="mr-2 ml-[17px] flex h-8 w-9 items-center justify-center rounded-[3px] bg-[#f4f5f7]">
        <svg width="16" height="4" fill="currentColor">
          <circle cx="2" cy="2" r="2" />
          <circle cx="8" cy="2" r="2" />
          <circle cx="14" cy="2" r="2" />
        </svg>
      </button>
    </div>
    <div className="mt-6 flex h-10 items-center">
      <label className="flex h-10 w-46 items-center rounded-[3px] border-2 border-[#dfe1e6] bg-[#fafbfc] pr-[10px] pl-[6px] text-[#5e6c84]">
        <input aria-label="Поиск по доске" placeholder="Поиск по доске" className="min-w-0 flex-1 text-sm outline-none placeholder:text-[#7a869a]" />
        <Magnifier size={13} />
      </label>
      <div className="ml-4 flex">
        <button aria-label="Мои задачи" className="relative rounded-full ring-2 ring-white">
          <Person size={32} color="#5243aa" />
        </button>
        <button aria-label="Не назначено" className="-ml-[2px]">
          <svg width="32" height="32" viewBox="0 0 32 32">
            <circle cx="16" cy="16" r="16" fill="#8993a4" />
            <circle cx="16" cy="9.500" r="5.500" fill="#fff" />
            <path d="M8 19a3 3 0 0 1 3-3h10a3 3 0 0 1 3 3v5c0 3-5 4-8 4s-8-1-8-4z" fill="#fff" />
          </svg>
        </button>
      </div>
      <button className="ml-4 h-8 rounded-[3px] bg-[#f4f5f7] px-[9px] text-sm font-medium text-[#42526e]">Только мои задачи</button>
      <button className="ml-[7px] h-8 rounded-[3px] bg-[#f4f5f7] px-[9px] text-sm font-medium text-[#42526e]">Последние обновления</button>
    </div>
    <Board />
  </main>
);

export default function App() {
  return (
    <div className="relative flex h-screen flex-col overflow-hidden bg-white font-['Noto_Sans',sans-serif]">
      <TabStrip />
      <NavBar />
      <BookmarkBar />
      <JiraHeader />
      <div className="flex min-h-0 flex-1">
        <Sidebar />
        <Main />
      </div>
      <div className="absolute right-6 bottom-6 flex h-11 items-center rounded-full bg-[#6554c0] pr-[10px] pl-[18px] text-white shadow-[0_6px_12px_rgba(9,30,66,0.25)]">
        <button className="flex items-center gap-[9px] text-[15px] font-medium">
          <svg width="13" height="16" viewBox="0 0 13 16" fill="#fff">
            <path d="M6.500 0a6.300 6.300 0 0 1 3.500 11.500V13H3v-1.500A6.300 6.300 0 0 1 6.500 0z" />
            <rect x="3.500" y="14" width="6" height="2" rx="0.500" />
          </svg>
          Quickstart
        </button>
        <button aria-label="Закрыть Quickstart" className="ml-4 flex h-[26px] w-[26px] items-center justify-center rounded-full bg-[#403294]">
          <svg width="10" height="10" viewBox="0 0 10 10" stroke="#eae6ff" strokeWidth="2.400" strokeLinecap="round">
            <path d="M2 2l6 6M8 2L2 8" />
          </svg>
        </button>
      </div>
      <div className="absolute bottom-0 left-0 flex h-[22px] items-center rounded-tr border-t border-r border-[#b8b8bc] bg-[#f9f9fb] pr-3 pl-1 text-sm whitespace-nowrap text-[#3a3a42]">
        https://vp32.atlassian.net/secure/RapidBoard.jspa?rapidView=3&amp;useStoredSettings=true
      </div>
    </div>
  );
}
